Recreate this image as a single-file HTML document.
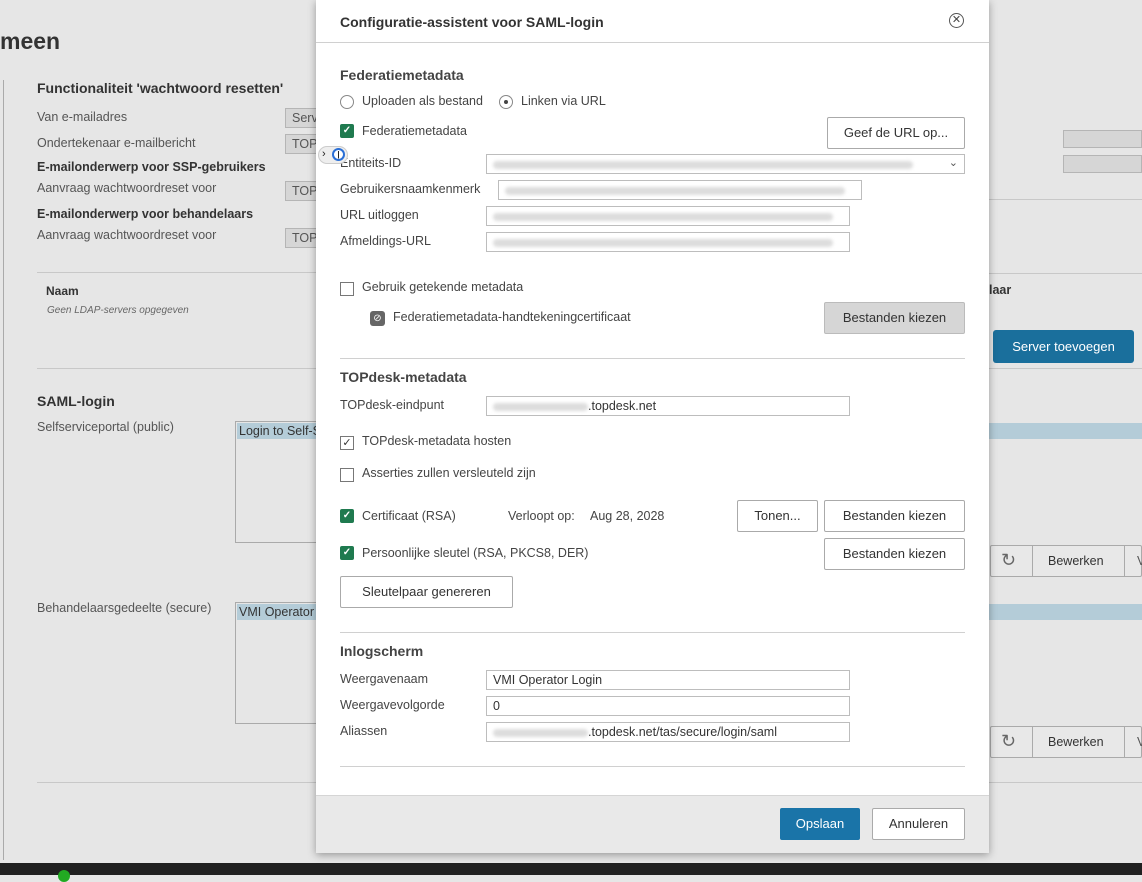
<!DOCTYPE html>
<html><head><meta charset="utf-8"><style>
*{box-sizing:border-box;margin:0;padding:0}
body{width:1142px;height:875px;overflow:hidden;background:#e6e6e6;font-family:"Liberation Sans",sans-serif;font-size:12.5px;color:#555;position:relative}
.a{position:absolute;white-space:nowrap}
.b{font-weight:bold;color:#333}
.h{font-weight:bold;color:#333;font-size:14px}
.gi{position:absolute;background:#d6d6d6;border:1px solid #b5b5b5;height:20px;padding:2px 6px;color:#555;overflow:hidden}
.ln{position:absolute;height:1px;background:#c8c8c8}
.m{position:absolute;left:316px;top:0;width:673px;height:853px;background:#fff;box-shadow:0 2px 8px rgba(0,0,0,.35)}
.m .a{color:#444}
.in{position:absolute;height:20px;border:1px solid #bdbdbd;background:#fff;padding:2px 6px;color:#333}
.blur{display:inline-block;height:8px;background:#ddd;border-radius:4px;vertical-align:middle;filter:blur(1.5px)}
.btn{position:absolute;height:32px;border:1px solid #aaa;border-radius:2px;background:#fff;color:#333;text-align:center;line-height:30px;font-size:13px}
.cb{position:absolute;width:14px;height:14px;border:1px solid #777;background:#fff}
.cg{position:absolute;width:14px;height:14px;background:#1f7a4f;border-radius:2px;color:#fff;font-size:10px;line-height:14px;text-align:center;font-weight:bold}
.rd{position:absolute;width:14px;height:14px;border:1px solid #888;border-radius:50%;background:#fff}
.ml{position:absolute;left:24px;right:24px;height:1px;background:#d0d0d0}
</style></head><body>
<div class="a b" style="left:0;top:28px;font-size:23px;color:#333">meen</div>
<div style="position:absolute;left:0;top:80px;width:4px;height:780px;border-right:1px solid #aaa"></div>
<div class="a h" style="left:37px;top:80px">Functionaliteit 'wachtwoord resetten'</div>
<div class="a" style="left:37px;top:110px">Van e-mailadres</div>
<div class="gi" style="left:285px;top:108px;width:40px">Serv</div>
<div class="a" style="left:37px;top:136px">Ondertekenaar e-mailbericht</div>
<div class="gi" style="left:285px;top:134px;width:40px">TOP</div>
<div class="a b" style="left:37px;top:160px">E-mailonderwerp voor SSP-gebruikers</div>
<div class="a" style="left:37px;top:181px">Aanvraag wachtwoordreset voor</div>
<div class="gi" style="left:285px;top:181px;width:40px">TOP</div>
<div class="a b" style="left:37px;top:207px">E-mailonderwerp voor behandelaars</div>
<div class="a" style="left:37px;top:228px">Aanvraag wachtwoordreset voor</div>
<div class="gi" style="left:285px;top:228px;width:40px">TOP</div>
<div class="ln" style="left:37px;top:272px;width:300px"></div>
<div class="a b" style="left:46px;top:284px;font-size:12px">Naam</div>
<div class="a" style="left:47px;top:305px;font-size:10px;font-style:italic;color:#666">Geen LDAP-servers opgegeven</div>
<div class="ln" style="left:37px;top:368px;width:300px"></div>
<div class="a h" style="left:37px;top:393px">SAML-login</div>
<div class="a" style="left:37px;top:420px">Selfserviceportal (public)</div>
<div style="position:absolute;left:235px;top:421px;width:100px;height:122px;border:1px solid #aaa"></div>
<div class="a" style="left:237px;top:423px;background:#b4ccd8;color:#333;padding:1px 2px;width:100px">Login to Self-S</div>
<div class="a" style="left:37px;top:601px">Behandelaarsgedeelte (secure)</div>
<div style="position:absolute;left:235px;top:602px;width:100px;height:122px;border:1px solid #aaa"></div>
<div class="a" style="left:237px;top:604px;background:#b4ccd8;color:#333;padding:1px 2px;width:100px">VMI Operator</div>
<div class="ln" style="left:37px;top:782px;width:300px"></div>
<div class="ln" style="left:989px;top:782px;width:153px"></div>
<!-- right side -->
<div style="position:absolute;left:1063px;top:130px;width:79px;height:18px;background:#d6d6d6;border:1px solid #b5b5b5"></div>
<div style="position:absolute;left:1063px;top:155px;width:79px;height:18px;background:#d6d6d6;border:1px solid #b5b5b5"></div>
<div class="ln" style="left:989px;top:199px;width:153px"></div>
<div class="a b" style="left:989px;top:283px">laar</div>
<div class="ln" style="left:989px;top:273px;width:153px"></div>
<div class="a" style="left:993px;top:330px;width:141px;height:33px;background:#1a6f9c;color:#fff;border-radius:3px;text-align:center;line-height:33px;font-size:13px">Server toevoegen</div>
<div class="ln" style="left:989px;top:368px;width:153px"></div>
<div style="position:absolute;left:989px;top:423px;width:153px;height:16px;background:#b4ccd8"></div>
<div style="position:absolute;left:989px;top:604px;width:153px;height:16px;background:#b4ccd8"></div>
<div style="position:absolute;left:990px;top:545px;width:152px;height:32px;border:1px solid #aaa;border-radius:2px;background:#e8e8e8"><span class="a" style="left:10px;top:4px;font-size:18px;color:#666">&#x21bb;</span><div style="position:absolute;left:41px;top:0;width:1px;height:30px;background:#aaa"></div><span class="a" style="left:57px;top:8px;color:#333">Bewerken</span><div style="position:absolute;left:133px;top:0;width:1px;height:30px;background:#aaa"></div><span class="a" style="left:146px;top:8px">V</span></div>
<div style="position:absolute;left:990px;top:726px;width:152px;height:32px;border:1px solid #aaa;border-radius:2px;background:#e8e8e8"><span class="a" style="left:10px;top:4px;font-size:18px;color:#666">&#x21bb;</span><div style="position:absolute;left:41px;top:0;width:1px;height:30px;background:#aaa"></div><span class="a" style="left:57px;top:8px;color:#333">Bewerken</span><div style="position:absolute;left:133px;top:0;width:1px;height:30px;background:#aaa"></div><span class="a" style="left:146px;top:8px">V</span></div>
<div style="position:absolute;left:0;top:863px;width:1142px;height:12px;background:#202020"></div>
<div style="position:absolute;left:58px;top:870px;width:12px;height:12px;border-radius:50%;background:#2a2"></div>
<!-- modal -->
<div class="m">
<div class="a b" style="left:24px;top:14px;font-size:14px;color:#333">Configuratie-assistent voor SAML-login</div>
<div class="a" style="left:633px;top:13px;width:15px;height:15px;border:1.5px solid #555;border-radius:50%;text-align:center;line-height:12px;font-size:11px;color:#444">✕</div>
<div style="position:absolute;left:0;top:42px;width:673px;height:1px;background:#d0d0d0"></div>
<div class="a h" style="left:24px;top:67px">Federatiemetadata</div>
<div class="rd" style="left:24px;top:95px"></div><div class="a" style="left:46px;top:94px">Uploaden als bestand</div>
<div class="rd" style="left:183px;top:95px"></div><div style="position:absolute;left:188px;top:100px;width:4px;height:4px;border-radius:50%;background:#444"></div><div class="a" style="left:205px;top:94px">Linken via URL</div>
<div class="cg" style="left:24px;top:124px">✓</div><div class="a" style="left:46px;top:124px">Federatiemetadata</div>
<div class="btn" style="left:511px;top:117px;width:138px">Geef de URL op...</div>
<div class="a" style="left:24px;top:156px">Entiteits-ID</div>
<div class="in" style="left:170px;top:154px;width:479px"><span class="blur" style="width:420px"></span><span class="a" style="right:6px;top:1px;font-size:11px;color:#555">⌄</span></div>
<div class="a" style="left:24px;top:182px">Gebruikersnaamkenmerk</div>
<div class="in" style="left:182px;top:180px;width:364px"><span class="blur" style="width:340px"></span></div>
<div class="a" style="left:24px;top:208px">URL uitloggen</div>
<div class="in" style="left:170px;top:206px;width:364px"><span class="blur" style="width:340px"></span></div>
<div class="a" style="left:24px;top:234px">Afmeldings-URL</div>
<div class="in" style="left:170px;top:232px;width:364px"><span class="blur" style="width:340px"></span></div>
<div class="cb" style="left:24px;top:282px"></div><div class="a" style="left:46px;top:280px">Gebruik getekende metadata</div>
<div class="a" style="left:54px;top:311px;width:15px;height:15px;background:#666;border-radius:3px;color:#fff;font-size:10px;text-align:center;line-height:15px">⊘</div>
<div class="a" style="left:77px;top:310px">Federatiemetadata-handtekeningcertificaat</div>
<div class="btn" style="left:508px;top:302px;width:141px;background:#d6d6d6;border-color:#bbb">Bestanden kiezen</div>
<div class="ml" style="top:358px"></div>
<div class="a h" style="left:24px;top:369px">TOPdesk-metadata</div>
<div class="a" style="left:24px;top:398px">TOPdesk-eindpunt</div>
<div class="in" style="left:170px;top:396px;width:364px"><span class="blur" style="width:95px"></span>.topdesk.net</div>
<div class="cb" style="left:24px;top:436px;font-size:11px;line-height:12px;text-align:center;color:#333">✓</div><div class="a" style="left:46px;top:434px">TOPdesk-metadata hosten</div>
<div class="cb" style="left:24px;top:468px"></div><div class="a" style="left:46px;top:466px">Asserties zullen versleuteld zijn</div>
<div class="cg" style="left:24px;top:509px">✓</div><div class="a" style="left:46px;top:509px">Certificaat (RSA)</div>
<div class="a" style="left:192px;top:509px">Verloopt op:</div><div class="a" style="left:274px;top:509px">Aug 28, 2028</div>
<div class="btn" style="left:421px;top:500px;width:81px">Tonen...</div>
<div class="btn" style="left:508px;top:500px;width:141px">Bestanden kiezen</div>
<div class="cg" style="left:24px;top:546px">✓</div><div class="a" style="left:46px;top:546px">Persoonlijke sleutel (RSA, PKCS8, DER)</div>
<div class="btn" style="left:508px;top:538px;width:141px">Bestanden kiezen</div>
<div class="btn" style="left:24px;top:576px;width:173px">Sleutelpaar genereren</div>
<div class="ml" style="top:632px"></div>
<div class="a h" style="left:24px;top:643px">Inlogscherm</div>
<div class="a" style="left:24px;top:672px">Weergavenaam</div>
<div class="in" style="left:170px;top:670px;width:364px">VMI Operator Login</div>
<div class="a" style="left:24px;top:698px">Weergavevolgorde</div>
<div class="in" style="left:170px;top:696px;width:364px">0</div>
<div class="a" style="left:24px;top:724px">Aliassen</div>
<div class="in" style="left:170px;top:722px;width:364px"><span class="blur" style="width:95px"></span>.topdesk.net/tas/secure/login/saml</div>
<div class="ml" style="top:766px"></div>
<div style="position:absolute;left:0;top:795px;width:673px;height:58px;background:#e9e9e9;border-top:1px solid #d5d5d5"></div>
<div class="btn" style="left:464px;top:808px;width:80px;background:#1a74a8;border-color:#1a74a8;color:#fff">Opslaan</div>
<div class="btn" style="left:556px;top:808px;width:93px">Annuleren</div>
</div>
<div class="a" style="left:318px;top:146px;width:30px;height:18px;border-radius:9px;background:#eee;border:1px solid #ccc;font-size:11px;color:#222;padding-left:3px;line-height:15px">›</div>
<div class="a" style="left:332px;top:148px;width:13px;height:13px;border-radius:50%;border:2px solid #2a6fd6;background:#fff;font-size:8px;text-align:center;line-height:9px;color:#222;font-weight:bold">|</div>
</body></html>
